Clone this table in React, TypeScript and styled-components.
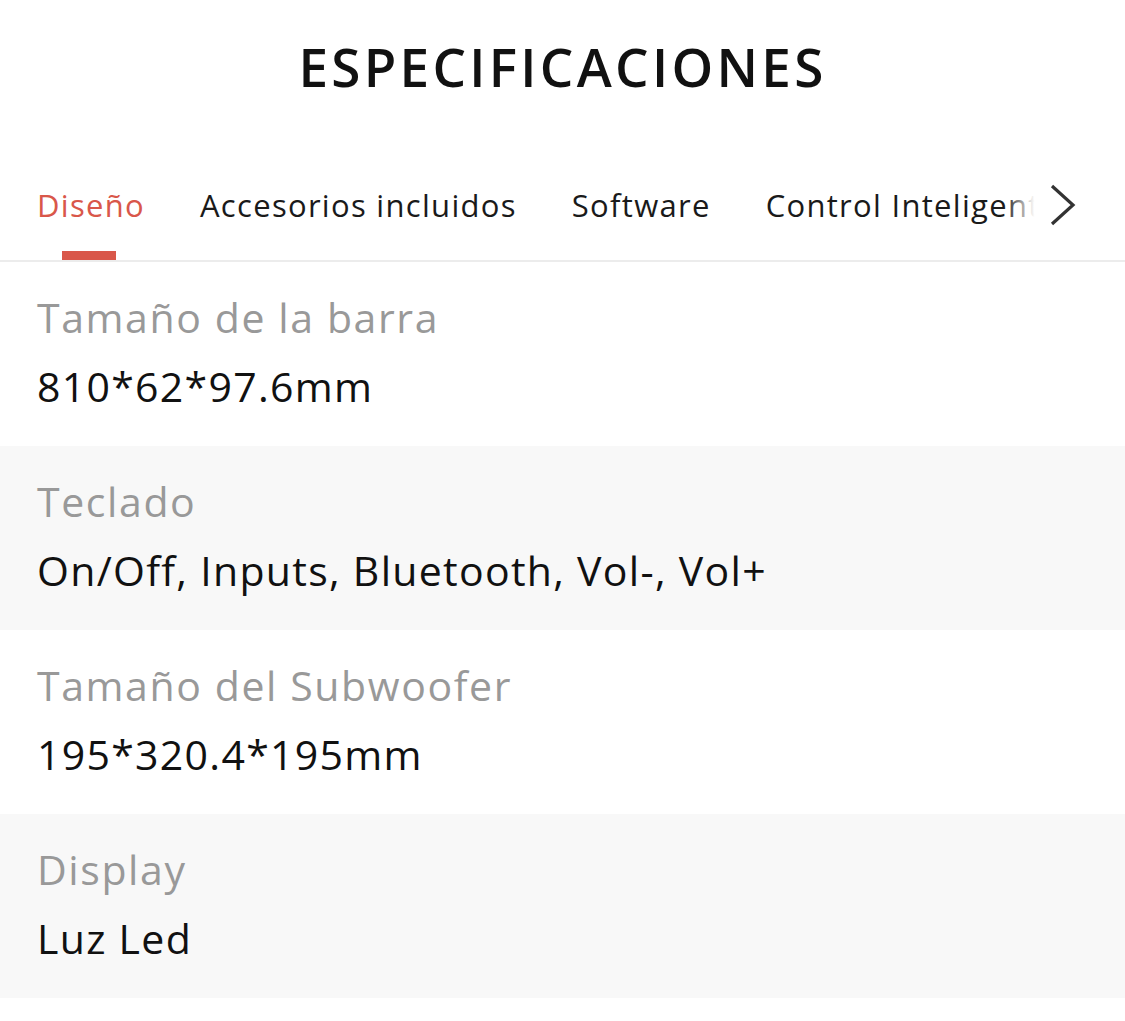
import { createGlobalStyle, styled } from 'styled-components'

const GlobalStyle = createGlobalStyle`
body {
    margin: 0;
    background: #fff;
    font-family: "Open Sans", Lato, sans-serif;
}
`

const specs = [
    { label: 'Tamaño de la barra', value: '810*62*97.6mm' },
    { label: 'Teclado', value: 'On/Off, Inputs, Bluetooth, Vol-, Vol+' },
    { label: 'Tamaño del Subwoofer', value: '195*320.4*195mm' },
    { label: 'Display', value: 'Luz Led' },
]

const tabs = ['Diseño', 'Accesorios incluidos', 'Software', 'Control Inteligente']

const App = () => {
    return (
        <Page>
            <GlobalStyle />
            <Title>ESPECIFICACIONES</Title>
            <TabBar>
                <TabScroll>
                    {tabs.map((t, i) => (
                        <Tab key={t} $active={i === 0}>{t}</Tab>
                    ))}
                    <Fade />
                </TabScroll>
                <Arrow>
                    <svg width="28" height="42" viewBox="0 0 28 42" fill="none">
                        <path d="M3 2l21 19L3 40" stroke="#333" strokeWidth="3.2" />
                    </svg>
                </Arrow>
            </TabBar>
            <List>
                {specs.map((s, i) => (
                    <Row key={s.label} $shaded={i % 2 === 1}>
                        <Label>{s.label}</Label>
                        <Value>{s.value}</Value>
                    </Row>
                ))}
            </List>
        </Page>
    )
}

export default App

const Page = styled.div`
width: 1125px;
display: flex;
flex-direction: column;
`
const Title = styled.h1`
margin: 0;
padding-top: 30px;
height: 138px;
box-sizing: border-box;
text-align: center;
font-size: 53px;
font-weight: 600;
color: #111;
letter-spacing: 3.3px;
`
const TabBar = styled.div`
height: 124px;
border-bottom: 2px solid #ececec;
box-sizing: border-box;
display: flex;
align-items: flex-start;
`
const TabScroll = styled.div`
position: relative;
display: flex;
gap: 55px;
padding-left: 37px;
width: 1040px;
flex-shrink: 0;
box-sizing: border-box;
overflow: hidden;
white-space: nowrap;
`
const Tab = styled.div<{ $active?: boolean }>`
position: relative;
flex-shrink: 0;
padding-top: 46px;
height: 122px;
box-sizing: border-box;
font-size: 31px;
letter-spacing: 1.3px;
color: ${(p) => (p.$active ? '#d9574a' : '#1a1a1a')};
&::after {
    content: '';
    display: ${(p) => (p.$active ? 'block' : 'none')};
    position: absolute;
    left: 25px;
    bottom: 0;
    width: 54px;
    height: 9px;
    background: #d9574a;
}
`
const Fade = styled.div`
position: absolute;
right: 0;
top: 40px;
width: 36px;
height: 70px;
background: linear-gradient(to right, rgba(255, 255, 255, 0), #fff 85%);
`
const Arrow = styled.div`
display: flex;
padding-top: 46px;
padding-left: 9px;
`
const List = styled.div`
display: flex;
flex-direction: column;
`
const Row = styled.div<{ $shaded?: boolean }>`
height: 184px;
box-sizing: border-box;
padding: 27px 37px 0;
background: ${(p) => (p.$shaded ? '#f8f8f8' : '#fff')};
display: flex;
flex-direction: column;
gap: 13px;
`
const Label = styled.div`
font-size: 41px;
letter-spacing: 1.6px;
color: #999;
`
const Value = styled.div`
font-size: 41px;
letter-spacing: 1.3px;
color: #111;
`
